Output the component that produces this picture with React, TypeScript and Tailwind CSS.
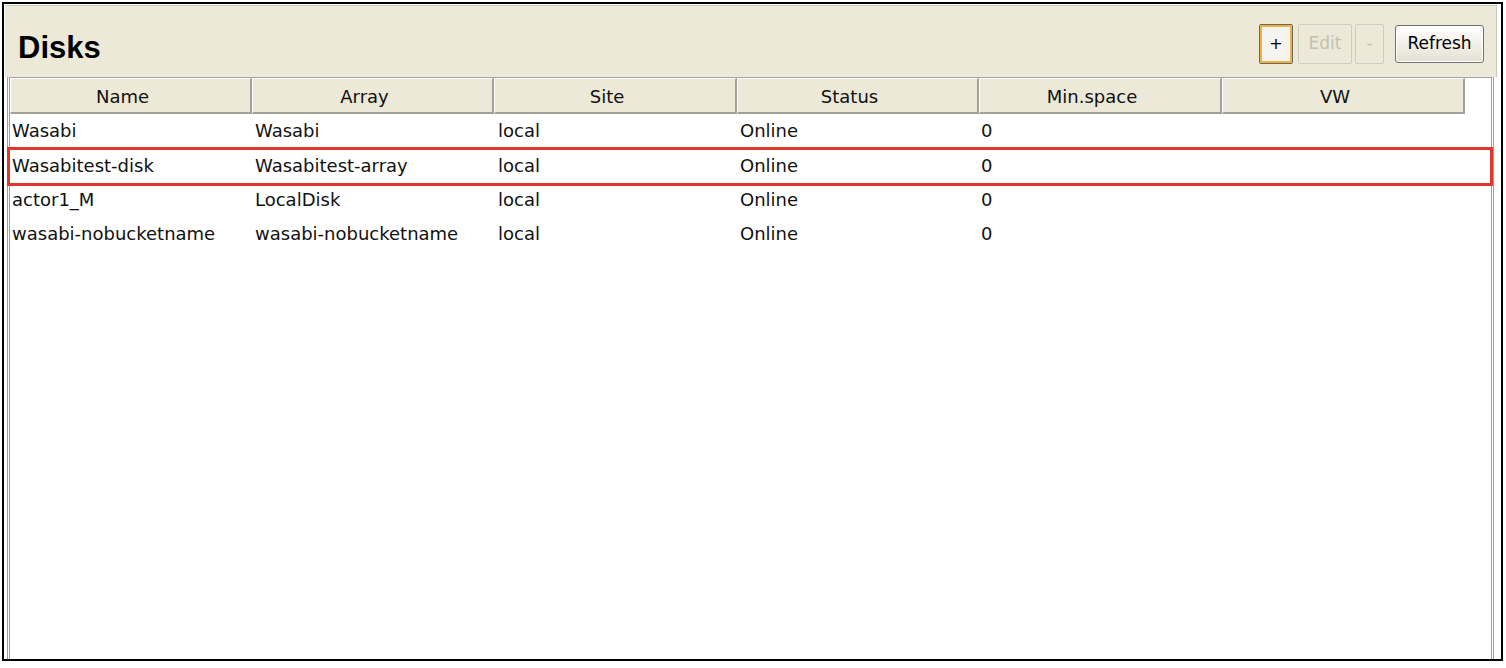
import React from "react";

const columns = ["Name", "Array", "Site", "Status", "Min.space", "VW"];

const disks = [
  { name: "Wasabi", array: "Wasabi", site: "local", status: "Online", minSpace: "0", vw: "" },
  { name: "Wasabitest-disk", array: "Wasabitest-array", site: "local", status: "Online", minSpace: "0", vw: "" },
  { name: "actor1_M", array: "LocalDisk", site: "local", status: "Online", minSpace: "0", vw: "" },
  { name: "wasabi-nobucketname", array: "wasabi-nobucketname", site: "local", status: "Online", minSpace: "0", vw: "" },
];

const gridCols = "grid grid-cols-[242px_242px_243px_242px_243px_243px]";

const App = () => {
  const highlighted = 1;

  return (
    <div
      className="w-[1506px] h-[668px] bg-white pt-[2px] pl-[2px] text-[#111]"
      style={{ fontFamily: '"DejaVu Sans", Verdana, sans-serif' }}
    >
      <div className="w-[1501px] h-[659px] border-2 border-black flex flex-col">
        {/* toolbar */}
        <div className="mt-[1px] ml-[1px] mr-[4px] h-[72px] bg-[#ece9d8] border-t border-r border-[#cdcabc] flex items-start justify-between">
          <h1
            className="mt-[24px] ml-[13px] text-[31px] leading-[36px] font-bold text-black"
            style={{ fontFamily: '"Liberation Sans", Arial, sans-serif' }}
          >
            Disks
          </h1>
          <div className="mt-[18px] mr-[12px] flex items-center">
            <button className="w-[34px] h-[40px] border border-[#666] rounded-[2px] bg-[#f5f4ef] shadow-[inset_0_0_0_2px_#f2b03c] text-[16px] text-black flex items-center justify-center">
              +
            </button>
            <button className="ml-[5px] w-[54px] h-[40px] border border-[#cfccbf] rounded-[2px] bg-[#ece9d8] text-[17px] text-[#c3c0b3]">
              Edit
            </button>
            <button className="ml-[3px] w-[29px] h-[40px] border border-[#cfccbf] rounded-[2px] bg-[#ece9d8] text-[16px] text-[#c3c0b3]">
              -
            </button>
            <button className="ml-[11px] w-[89px] h-[38px] border border-[#707070] rounded-[3px] bg-gradient-to-b from-white to-[#e4e1d3] shadow-[inset_0_0_0_1px_#ffffff] text-[17px] text-black">
              Refresh
            </button>
          </div>
        </div>

        {/* table */}
        <div className="ml-[3px] mr-[7px] flex-1 bg-white border-x-[3px] border-double border-x-[#9f9f9f] border-t border-t-[#a5a5a5]">
          <div className={`${gridCols} h-[36px]`}>
            {columns.map((col) => (
              <div
                key={col}
                className="bg-[#ece9d8] border-t border-l border-white border-r-2 border-b-2 border-r-[#a3a199] border-b-[#a3a199] flex items-center justify-center pr-[16px] pt-[3px] text-[18px] leading-none"
              >
                {col}
              </div>
            ))}
          </div>
          {disks.map((d, i) => (
            <div key={d.name} className={`${gridCols} relative h-[34.4px] items-center text-[18px] leading-none`}>
              <div className="pl-[2px] whitespace-nowrap">{d.name}</div>
              <div className="pl-[3px] whitespace-nowrap">{d.array}</div>
              <div className="pl-[4px]">{d.site}</div>
              <div className="pl-[3px]">{d.status}</div>
              <div className="pl-[2px]">{d.minSpace}</div>
              <div className="pl-[2px]">{d.vw}</div>
              {i === highlighted && (
                <div className="absolute -left-[3px] -right-[2px] -top-[1px] -bottom-[3px] border-[3px] border-[#e0362b] pointer-events-none" />
              )}
            </div>
          ))}
        </div>
      </div>
    </div>
  );
};

export default App;
